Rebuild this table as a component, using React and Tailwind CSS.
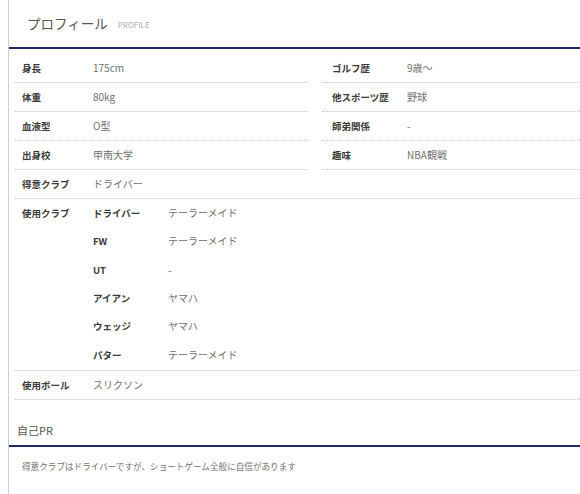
import React from "react";

const leftRows = [
  { label: "身長", value: "175cm" },
  { label: "体重", value: "80kg" },
  { label: "血液型", value: "O型" },
  { label: "出身校", value: "甲南大学" },
];

const rightRows = [
  { label: "ゴルフ歴", value: "9歳〜" },
  { label: "他スポーツ歴", value: "野球" },
  { label: "師弟関係", value: "-" },
  { label: "趣味", value: "NBA観戦" },
];

const clubs = [
  { name: "ドライバー", maker: "テーラーメイド" },
  { name: "FW", maker: "テーラーメイド" },
  { name: "UT", maker: "-" },
  { name: "アイアン", maker: "ヤマハ" },
  { name: "ウェッジ", maker: "ヤマハ" },
  { name: "パター", maker: "テーラーメイド" },
];

const Row = ({ label, value, right }) => (
  <div
    className={`flex items-center h-[29px] border-b border-dotted border-[#c8c8c8] leading-3 ${
      right ? "pl-[10px]" : "pl-[7px]"
    }`}
  >
    <div className={`${right ? "w-[75px]" : "w-[71px]"} shrink-0 text-[9.5px] font-bold text-[#3a3a3a]`}>
      {label}
    </div>
    <div className="text-[10px] text-[#707070]">{value}</div>
  </div>
);

export default function App() {
  return (
    <div className="min-h-[494px] bg-white font-['Noto_Sans_CJK_JP',sans-serif]">
      <div className="ml-2 min-h-[494px] border-l border-[#cfcfcf]">
        {/* header */}
        <div className="h-[47px] flex items-center pl-[18px] gap-[10px]">
          <span className="text-[13.5px] text-[#555] leading-none">プロフィール</span>
          <span className="text-[8px] text-[#aaa] leading-none mt-[2px]">PROFILE</span>
        </div>
        <div className="h-[2px] bg-[#1f2b5e]" />

        {/* table */}
        <div className="mt-[5px] pl-[6px]">
          <div className="grid grid-cols-[292px_1fr] gap-x-[15px]">
            <div>
              {leftRows.map((r) => (
                <Row key={r.label} {...r} />
              ))}
            </div>
            <div>
              {rightRows.map((r) => (
                <Row key={r.label} {...r} right />
              ))}
            </div>
          </div>

          <Row label="得意クラブ" value="ドライバー" />

          <div className="flex pl-[7px] border-b border-dotted border-[#c8c8c8] pb-[1px]">
            <div className="w-[71px] shrink-0 h-[28px] flex items-center text-[9.5px] font-bold text-[#3a3a3a] leading-3">
              使用クラブ
            </div>
            <div className="flex flex-col">
              {clubs.map((c) => (
                <div key={c.name} className="flex items-center h-[28.3px] leading-3">
                  <div className="w-[75px] shrink-0 text-[9.5px] font-bold text-[#3a3a3a]">{c.name}</div>
                  <div className="text-[10px] text-[#707070]">{c.maker}</div>
                </div>
              ))}
            </div>
          </div>

          <Row label="使用ボール" value="スリクソン" />
        </div>

        {/* PR */}
        <div className="pt-[24px] pb-[9px] pl-2 text-[11px] text-[#555] leading-3">自己PR</div>
        <div className="h-[2px] bg-[#1f2b5e]" />
        <div className="pt-[13px] pl-[13px] text-[8.6px] text-[#707070] leading-3">
          得意クラブはドライバーですが、ショートゲーム全般に自信があります
        </div>
      </div>
    </div>
  );
}
